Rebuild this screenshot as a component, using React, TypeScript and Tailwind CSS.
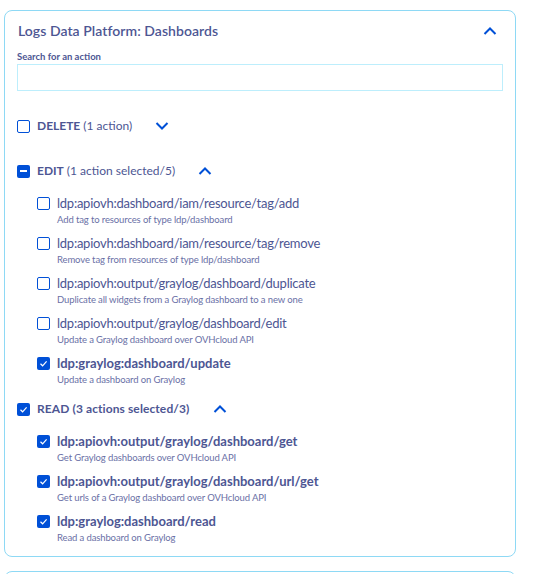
import { FC } from "react";

type Item = { name: string; desc: string; checked: boolean };

const editItems: Item[] = [
  { name: "ldp:apiovh:dashboard/iam/resource/tag/add", desc: "Add tag to resources of type ldp/dashboard", checked: false },
  { name: "ldp:apiovh:dashboard/iam/resource/tag/remove", desc: "Remove tag from resources of type ldp/dashboard", checked: false },
  { name: "ldp:apiovh:output/graylog/dashboard/duplicate", desc: "Duplicate all widgets from a Graylog dashboard to a new one", checked: false },
  { name: "ldp:apiovh:output/graylog/dashboard/edit", desc: "Update a Graylog dashboard over OVHcloud API", checked: false },
  { name: "ldp:graylog:dashboard/update", desc: "Update a dashboard on Graylog", checked: true },
];

const readItems: Item[] = [
  { name: "ldp:apiovh:output/graylog/dashboard/get", desc: "Get Graylog dashboards over OVHcloud API", checked: true },
  { name: "ldp:apiovh:output/graylog/dashboard/url/get", desc: "Get urls of a Graylog dashboard over OVHcloud API", checked: true },
  { name: "ldp:graylog:dashboard/read", desc: "Read a dashboard on Graylog", checked: true },
];

const Chevron: FC<{ up?: boolean }> = ({ up }) => (
  <svg width="14" height="8" viewBox="0 0 14 8" fill="none">
    <path
      d={up ? "M1.5 7 L7 1.5 L12.5 7" : "M1.5 1 L7 6.5 L12.5 1"}
      stroke="#0050d7"
      strokeWidth="2"
    />
  </svg>
);

const Box: FC<{ state: "off" | "on" | "some" }> = ({ state }) => {
  if (state === "off")
    return <div className="w-[13px] h-[13px] shrink-0 rounded-[2px] border-[1.5px] border-[#0050d7] bg-white" />;
  return (
    <div className="w-[13px] h-[13px] shrink-0 rounded-[2px] bg-[#0050d7] flex items-center justify-center">
      {state === "some" ? (
        <div className="w-[7px] h-[1.5px] bg-white" />
      ) : (
        <svg width="9" height="9" viewBox="0 0 9 9" fill="none">
          <path d="M1.5 4.8 L3.6 6.8 L7.6 2.4" stroke="white" strokeWidth="1.2" />
        </svg>
      )}
    </div>
  );
};

const Row: FC<{ item: Item }> = ({ item }) => (
  <div className="flex items-start gap-[7px]">
    <div className="mt-[3px]">
      <Box state={item.checked ? "on" : "off"} />
    </div>
    <div className="flex flex-col">
      <div
        className={`text-[13px] leading-[18px] ${
          item.checked ? "font-bold" : "font-normal tracking-[-0.25px]"
        }`}
      >
        {item.name}
      </div>
      <div className="text-[9.5px] leading-[15px] tracking-[-0.12px] text-[#6a70a6]">{item.desc}</div>
    </div>
  </div>
);

export default function App() {
  return (
    <div
      className="w-[542px] h-[574px] bg-white overflow-hidden pl-[4px] pt-[10px] text-[#4d5693]"
      style={{ fontFamily: "Lato, 'Open Sans', sans-serif" }}
    >
      <div className="w-[512px] border border-[#8ed9f5] rounded-lg px-[12px] pt-[10px] pb-[11px]">
        <div className="flex items-center justify-between pl-[1px]">
          <div className="text-[14px] leading-[20px] font-semibold tracking-[0.05px]">
            Logs Data Platform: Dashboards
          </div>
          <div className="mr-[6px]">
            <Chevron up />
          </div>
        </div>

        <div className="mt-[10px] text-[9.5px] leading-[12px] font-bold">Search for an action</div>
        <div className="mt-[1px] h-[27px] w-[486px] border border-[#bdeefc]" />

        <div className="mt-[25px] flex items-center h-[20px]">
          <Box state="off" />
          <div className="ml-[7px] text-[12px]">
            <span className="font-bold">DELETE</span> (1 action)
          </div>
          <div className="ml-[23px]">
            <Chevron />
          </div>
        </div>

        <div className="mt-[25px] flex items-center h-[20px]">
          <Box state="some" />
          <div className="ml-[7px] text-[12px]">
            <span className="font-bold">EDIT</span> (1 action selected/5)
          </div>
          <div className="ml-[23px]">
            <Chevron up />
          </div>
        </div>

        <div className="mt-[13px] pl-[20px] flex flex-col gap-[7px]">
          {editItems.map((it) => (
            <Row key={it.name} item={it} />
          ))}
        </div>

        <div className="mt-[12px] flex items-center h-[20px]">
          <Box state="on" />
          <div className="ml-[7px] text-[12px] font-bold tracking-[0.1px]">READ (3 actions selected/3)</div>
          <div className="ml-[24px]">
            <Chevron up />
          </div>
        </div>

        <div className="mt-[13px] pl-[20px] flex flex-col gap-[7px]">
          {readItems.map((it) => (
            <Row key={it.name} item={it} />
          ))}
        </div>
      </div>
      <div className="mt-[14px] w-[512px] h-[40px] border border-[#8ed9f5] rounded-lg" />
    </div>
  );
}
